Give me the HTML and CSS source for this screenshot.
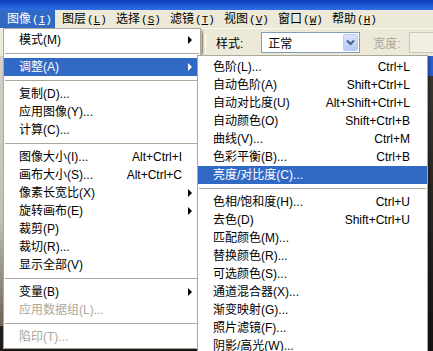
FILE: index.html
```html
<!DOCTYPE html>
<html lang="zh-CN">
<head>
  <meta charset="UTF-8" />
  <title>图像菜单 - 调整</title>
  <link rel="stylesheet" href="styles.css">
</head>
<body>
  <div class="titlebar"></div>

  <nav class="menubar">
    <span class="menubar-item ativo">图像<span class="acc">(<u>I</u>)</span></span>
    <span class="menubar-item">图层<span class="acc">(<u>L</u>)</span></span>
    <span class="menubar-item">选择<span class="acc">(<u>S</u>)</span></span>
    <span class="menubar-item">滤镜<span class="acc">(<u>T</u>)</span></span>
    <span class="menubar-item">视图<span class="acc">(<u>V</u>)</span></span>
    <span class="menubar-item">窗口<span class="acc">(<u>W</u>)</span></span>
    <span class="menubar-item">帮助<span class="acc">(<u>H</u>)</span></span>
  </nav>

  <div class="optionsbar">
    <span class="grip"></span>
    <span class="opt-label">样式:</span>
    <div class="select">
      <span>正常</span>
      <span class="select-btn">
        <svg width="9" height="7" viewBox="0 0 9 7"><path d="M1 1.5 L4.5 5 L8 1.5" fill="none" stroke="#4d6185" stroke-width="2"/></svg>
      </span>
    </div>
    <span class="opt-label desativado">宽度:</span>
    <div class="input-box"></div>
  </div>

  <div class="workspace">
    <div class="toolbox"></div>
    <div class="docwin"></div>
  </div>

  <!-- menu principal: Imagem -->
  <ul class="menu menu-main">
    <li class="item"><span class="label">模式(M)</span><span class="sc"></span><span class="seta"><i></i></span></li>
    <li class="sep"></li>
    <li class="item ativo"><span class="label">调整(A)</span><span class="sc"></span><span class="seta"><i></i></span></li>
    <li class="sep"></li>
    <li class="item"><span class="label">复制(D)...</span></li>
    <li class="item"><span class="label">应用图像(Y)...</span></li>
    <li class="item"><span class="label">计算(C)...</span></li>
    <li class="sep"></li>
    <li class="item"><span class="label">图像大小(I)...</span><span class="sc">Alt+Ctrl+I</span><span class="seta"></span></li>
    <li class="item"><span class="label">画布大小(S)...</span><span class="sc">Alt+Ctrl+C</span><span class="seta"></span></li>
    <li class="item"><span class="label">像素长宽比(X)</span><span class="sc"></span><span class="seta"><i></i></span></li>
    <li class="item"><span class="label">旋转画布(E)</span><span class="sc"></span><span class="seta"><i></i></span></li>
    <li class="item"><span class="label">裁剪(P)</span></li>
    <li class="item"><span class="label">裁切(R)...</span></li>
    <li class="item"><span class="label">显示全部(V)</span></li>
    <li class="sep"></li>
    <li class="item"><span class="label">变量(B)</span><span class="sc"></span><span class="seta"><i></i></span></li>
    <li class="item desativado"><span class="label">应用数据组(L)...</span></li>
    <li class="sep"></li>
    <li class="item desativado"><span class="label">陷印(T)...</span></li>
  </ul>

  <!-- submenu: Ajustes -->
  <ul class="menu menu-sub">
    <li class="item"><span class="label">色阶(L)...</span><span class="sc">Ctrl+L</span><span class="seta"></span></li>
    <li class="item"><span class="label">自动色阶(A)</span><span class="sc">Shift+Ctrl+L</span><span class="seta"></span></li>
    <li class="item"><span class="label">自动对比度(U)</span><span class="sc">Alt+Shift+Ctrl+L</span><span class="seta"></span></li>
    <li class="item"><span class="label">自动颜色(O)</span><span class="sc">Shift+Ctrl+B</span><span class="seta"></span></li>
    <li class="item"><span class="label">曲线(V)...</span><span class="sc">Ctrl+M</span><span class="seta"></span></li>
    <li class="item"><span class="label">色彩平衡(B)...</span><span class="sc">Ctrl+B</span><span class="seta"></span></li>
    <li class="item ativo"><span class="label">亮度/对比度(C)...</span></li>
    <li class="sep"></li>
    <li class="item"><span class="label">色相/饱和度(H)...</span><span class="sc">Ctrl+U</span><span class="seta"></span></li>
    <li class="item"><span class="label">去色(D)</span><span class="sc">Shift+Ctrl+U</span><span class="seta"></span></li>
    <li class="item"><span class="label">匹配颜色(M)...</span></li>
    <li class="item"><span class="label">替换颜色(R)...</span></li>
    <li class="item"><span class="label">可选颜色(S)...</span></li>
    <li class="item"><span class="label">通道混合器(X)...</span></li>
    <li class="item"><span class="label">渐变映射(G)...</span></li>
    <li class="item"><span class="label">照片滤镜(F)...</span></li>
    <li class="item"><span class="label">阴影/高光(W)...</span></li>
  </ul>
</body>
</html>
```

FILE: styles.css
```css
:root {
  --cor-xp: #ece9d8;
  --cor-selecao: #316ac5;
  --cor-borda: #aca899;
  --cor-desativado: #aca899;
}

* {
  margin: 0;
  padding: 0;
  box-sizing: border-box;
}

body {
  width: 433px;
  height: 351px;
  overflow: hidden;
  position: relative;
  font-family: "Liberation Sans", "Noto Sans CJK SC", sans-serif;
  font-size: 12px;
  color: #000;
  background-color: #2b2620;
}

.titlebar {
  height: 10px;
  background: linear-gradient(#0a3fb8, #2d6ee6);
}

.menubar {
  height: 18px;
  background-color: var(--cor-xp);
  display: flex;
  align-items: center;
}

.menubar-item {
  width: 54px;
  height: 18px;
  line-height: 18px;
  padding-left: 7px;
  white-space: nowrap;
}

.menubar-item:first-child {
  width: 55px;
}

.menubar-item.ativo {
  background-color: var(--cor-selecao);
  color: white;
}

.acc {
  font-family: "Liberation Mono", monospace;
  font-size: 11px;
  margin-left: 1px;
}

.optionsbar {
  height: 28px;
  background-color: var(--cor-xp);
  border-top: 1px solid #f8f7f0;
  display: flex;
  align-items: center;
  padding-left: 202px;
}

.grip {
  width: 4px;
  height: 20px;
  border-left: 1px solid #aca899;
  border-right: 1px solid #fff;
  margin-right: 10px;
}

.opt-label {
  white-space: nowrap;
}

.opt-label.desativado {
  color: var(--cor-desativado);
  margin-left: 13px;
}

.select {
  margin-left: 18px;
  width: 99px;
  height: 21px;
  background: white;
  border: 1px solid #7f9db9;
  display: flex;
  align-items: center;
  justify-content: space-between;
  padding: 1px 1px 1px 6px;
}

.select-btn {
  width: 15px;
  height: 17px;
  background: linear-gradient(#d8e4fd, #b5cbf7);
  border: 1px solid #b8cbf4;
  border-radius: 2px;
  display: flex;
  align-items: center;
  justify-content: center;
}

.input-box {
  margin-left: 8px;
  flex: 1;
  height: 21px;
  background-color: #f1efe2;
  border: 1px solid #c9c7ba;
  border-right: none;
}

.workspace {
  height: 295px;
  display: flex;
  justify-content: space-between;
  background: linear-gradient(#4a4238, #1f1b17);
}

.toolbox {
  width: 3px;
  height: 270px;
  background: linear-gradient(#d4d0c8, #c4c0b4 60%, #6d6458);
}

.docwin {
  width: 5px;
  background: linear-gradient(#2b5fd0 0, #2b5fd0 20px, #3a352e 20px, #16130f);
}

/* menus suspensos */
.menu {
  position: absolute;
  list-style: none;
  background-color: white;
  border: 1px solid var(--cor-borda);
  padding: 2px 0;
  box-shadow: 2px 2px 2px rgba(0, 0, 0, 0.25);
}

.menu-main {
  left: 3px;
  top: 28px;
  width: 198px;
}

.menu-sub {
  left: 197px;
  top: 55px;
  width: 231px;
}

.item {
  height: 18px;
  line-height: 18px;
  display: flex;
  padding-left: 15px;
  white-space: nowrap;
}

.item .label {
  flex: 1;
}

.item .seta {
  width: 18px;
  display: flex;
  align-items: center;
  padding-left: 6px;
}

.menu-sub .item .seta {
  width: 17px;
}

.item .seta i {
  width: 0;
  height: 0;
  border-left: 4px solid #000;
  border-top: 4px solid transparent;
  border-bottom: 4px solid transparent;
}

.item.ativo {
  background-color: var(--cor-selecao);
  color: white;
}

.item.ativo .seta i {
  border-left-color: white;
}

.item.desativado {
  color: var(--cor-desativado);
}

.sep {
  height: 1px;
  margin: 4px 1px;
  background-color: var(--cor-borda);
}
```
